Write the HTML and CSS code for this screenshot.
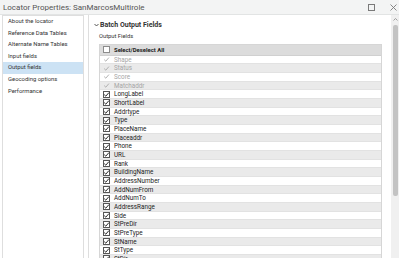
FILE: index.html
```html
<!DOCTYPE html>
<html lang="en">
<head>
    <meta charset="UTF-8">
    <title>Locator Properties</title>
    <link rel="stylesheet" href="styles.css">
</head>
<body>
    <header class="titlebar">
        <span class="title">Locator Properties: SanMarcosMultirole</span>
        <div class="win-btns">
            <svg class="win-btn" width="7" height="7" viewBox="0 0 7 7"><rect x="0.5" y="0.5" width="6" height="6" fill="none" stroke="#7a7a7a" stroke-width="1"/></svg>
            <svg class="win-btn" width="7" height="7" viewBox="0 0 7 7"><path d="M0.5 0.5 L6.5 6.5 M6.5 0.5 L0.5 6.5" stroke="#7a7a7a" stroke-width="0.9"/></svg>
        </div>
    </header>

    <div class="main">
        <nav class="side">
            <a href="#">About the locator</a>
            <a href="#">Reference Data Tables</a>
            <a href="#">Alternate Name Tables</a>
            <a href="#">Input fields</a>
            <a href="#" class="active">Output fields</a>
            <a href="#">Geocoding options</a>
            <a href="#">Performance</a>
        </nav>

        <section class="content">
            <div class="pane">
                <div class="group-head">
                    <svg class="chev" width="5" height="4" viewBox="0 0 5 4"><path d="M0.5 1 L2.5 3 L4.5 1" fill="none" stroke="#444" stroke-width="0.9"/></svg>
                    Batch Output Fields
                </div>
                <div class="label">Output Fields</div>
                <div class="fields" id="fields">
                    <div class="row head">
                        <span class="box"></span>
                        <span class="name">Select/Deselect All</span>
                    </div>
                </div>
            </div>
            <div class="scrollbar">
                <svg class="arrow" width="5" height="3" viewBox="0 0 5 3"><path d="M0.5 2.5 L2.5 0.5 L4.5 2.5" fill="none" stroke="#8a8a8a" stroke-width="0.8"/></svg>
                <div class="thumb"></div>
            </div>
        </section>
    </div>

    <script>
        const disabled = ['Shape', 'Status', 'Score', 'Matchaddr'];
        const enabled = ['LongLabel', 'ShortLabel', 'Addrtype', 'Type', 'PlaceName', 'Placeaddr',
            'Phone', 'URL', 'Rank', 'BuildingName', 'AddressNumber', 'AddNumFrom', 'AddNumTo',
            'AddressRange', 'Side', 'StPreDir', 'StPreType', 'StName', 'StType', 'StDir', 'BldgType'];
        const check = '<svg width="7" height="7" viewBox="0 0 7 7"><path d="M1.2 3.6 L2.8 5.2 L5.9 1.6" fill="none" stroke-width="0.9"/></svg>';
        const list = document.getElementById('fields');

        // build the field rows, every second one striped
        disabled.concat(enabled).forEach((name, i) => {
            const row = document.createElement('div');
            row.className = 'row' + (i % 2 ? ' alt' : '') + (disabled.includes(name) ? ' off' : '');
            row.innerHTML = '<span class="box">' + check + '</span><span class="name">' + name + '</span>';
            list.appendChild(row);
        });
    </script>
</body>
</html>
```

FILE: styles.css
```css
body {
    margin: 0;
    width: 399px;
    height: 258px;
    overflow: hidden;
    background: #ffffff;
    font-family: Roboto, "Open Sans", sans-serif;
    color: #262626;
}

.titlebar {
    height: 14px;
    background: #f3f4f4;
    border-bottom: 1px solid #e2e4e4;
    display: flex;
    align-items: center;
    justify-content: space-between;
    padding-left: 3px;
}

.title {
    font-size: 8px;
    color: #555;
}

.win-btns {
    display: flex;
    align-items: center;
    gap: 15px;
    padding-right: 2px;
}

.main {
    display: flex;
    height: 243px;
}

.side {
    width: 80px;
    margin-left: 2px;
    border: 1px solid #dedede;
    border-bottom: none;
    display: flex;
    flex-direction: column;
}

.side a {
    height: 11.6px;
    line-height: 11.6px;
    padding-left: 5px;
    font-size: 5.9px;
    color: #333;
    text-decoration: none;
    white-space: nowrap;
}

.side a.active {
    background: #cce2f4;
}

.content {
    flex: 1;
    margin-left: 4px;
    border-left: 1px solid #dedede;
    display: flex;
    overflow: hidden;
}

.pane {
    flex: 1;
    padding: 4px 9px 0 10px;
    overflow: hidden;
}

.group-head {
    height: 11px;
    font-size: 7px;
    font-weight: bold;
    color: #333;
    display: flex;
    align-items: center;
}

.chev {
    margin-left: -5px;
    margin-right: 1px;
}

.label {
    height: 12px;
    line-height: 12px;
    font-size: 5.8px;
    color: #333;
    margin-bottom: 2px;
}

.fields {
    border: 1px solid #d6d6d6;
    border-bottom: none;
}

.row {
    height: 8.68px;
    box-sizing: border-box;
    border-bottom: 1px solid #e2e2e2;
    display: flex;
    align-items: center;
    font-size: 6.3px;
    color: #222;
    background: #ffffff;
}

.row.alt {
    background: #eaeaea;
}

.row.head {
    height: 10.66px;
    background: #dcdcdc;
    font-size: 5.9px;
    font-weight: bold;
    border-bottom: 1px solid #d0d0d0;
}

.box {
    width: 7px;
    height: 7px;
    box-sizing: border-box;
    margin: 0 4px 0 3px;
    border: 1px solid #555;
    background: #fff;
    display: flex;
    align-items: center;
    justify-content: center;
}

.box svg {
    stroke: #111;
    margin: -1px;
}

.head .box {
    border-color: #8c8c8c;
}

.row.off .box {
    border-color: transparent;
    background: transparent;
}

.row.off .box svg {
    stroke: #a8a8a8;
}

.row.off .name {
    color: #a5a5a5;
}

.scrollbar {
    width: 8px;
    background: #f0f0f0;
    display: flex;
    flex-direction: column;
    align-items: center;
}

.arrow {
    margin-top: 3px;
}

.thumb {
    width: 5px;
    height: 171px;
    margin-top: 4px;
    background: #c3c3c3;
    border-radius: 2px;
}
```
